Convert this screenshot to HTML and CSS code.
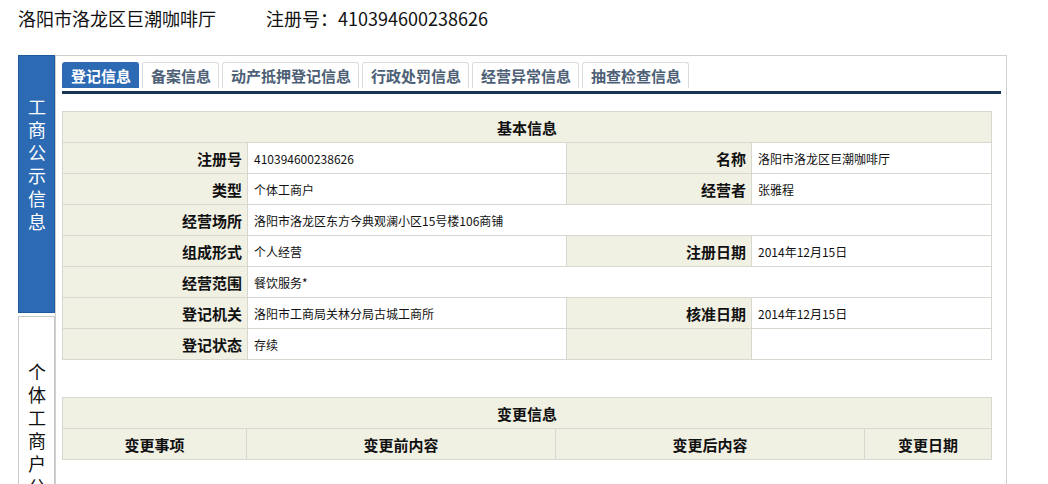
FILE: index.html
```html
<html>
<head>
    <title>企业信用信息公示</title>
    <link rel="stylesheet" href="styles.css">
</head>
<body>
    <div class="top">
        <span class="corp">洛阳市洛龙区巨潮咖啡厅</span>
        <span class="regno">注册号：410394600238626</span>
    </div>

    <div class="wrap">
        <div class="side">
            <div class="side-box active">工商公示信息</div>
            <div class="side-box">个体工商户公示信息</div>
        </div>

        <div class="main">
            <ul class="tabs">
                <li class="on">登记信息</li>
                <li>备案信息</li>
                <li>动产抵押登记信息</li>
                <li>行政处罚信息</li>
                <li>经营异常信息</li>
                <li>抽查检查信息</li>
            </ul>

            <table class="info">
                <tr><th colspan="4" class="cap">基本信息</th></tr>
                <tr>
                    <th class="c1">注册号</th><td class="c2">410394600238626</td>
                    <th class="c3">名称</th><td>洛阳市洛龙区巨潮咖啡厅</td>
                </tr>
                <tr>
                    <th>类型</th><td>个体工商户</td>
                    <th>经营者</th><td>张雅程</td>
                </tr>
                <tr>
                    <th>经营场所</th><td colspan="3">洛阳市洛龙区东方今典观澜小区15号楼106商铺</td>
                </tr>
                <tr>
                    <th>组成形式</th><td>个人经营</td>
                    <th>注册日期</th><td>2014年12月15日</td>
                </tr>
                <tr>
                    <th>经营范围</th><td colspan="3">餐饮服务*</td>
                </tr>
                <tr>
                    <th>登记机关</th><td>洛阳市工商局关林分局古城工商所</td>
                    <th>核准日期</th><td>2014年12月15日</td>
                </tr>
                <tr>
                    <th>登记状态</th><td>存续</td>
                    <th></th><td></td>
                </tr>
            </table>

            <table class="info change">
                <tr><th colspan="4" class="cap">变更信息</th></tr>
                <tr>
                    <th class="w1">变更事项</th>
                    <th class="w2">变更前内容</th>
                    <th class="w2">变更后内容</th>
                    <th>变更日期</th>
                </tr>
            </table>
        </div>
    </div>
</body>
</html>
```

FILE: styles.css
```css
body {
    margin: 0;
    background: white;
    font-family: "Noto Sans CJK SC", "Liberation Sans", sans-serif;
    color: #111;
}

.top {
    height: 55px; line-height: 36px;
    padding-left: 18px;
    font-size: 18px;
}

.top .regno {
    margin-left: 46px;
}

.wrap {
    display: flex;
    margin-left: 18px;
    width: 989px;
    height: 520px;
}

.side {
    width: 37px; flex: none;
}

.side-box {
    height: 258px;
    box-sizing: border-box;
    writing-mode: vertical-rl;
    font-size: 18px; line-height: 35px;
    letter-spacing: 5px;
    padding-top: 44px;
    border: 1px solid #c8c8c8;
    margin-bottom: 3px;
    color: #111;
}

.side-box.active {
    background: #2c6bb3; border-color: #1f5a9c;
    color: white;
    padding-top: 42px;
}

.side-box + .side-box {
    height: 259px;
    padding-top: 46px;
}

.main {
    flex: 1;
    border: 1px solid #cfcfcf;
    padding: 6px 5px 0 6px;
}

.tabs {
    list-style: none; margin: 0; padding: 0 0 3px 0;
    display: flex;
    border-bottom: 3px solid #173553;
}

.tabs li {
    height: 25px; line-height: 25px;
    padding: 0 7px 0 8px;
    margin-right: 3px;
    font-size: 15px; font-weight: bold;
    color: #4d6075;
    border: 1px solid #dcdcdc; border-bottom: none;
    border-radius: 3px 3px 0 0;
    background: white;
}

.tabs li.on {
    background: #2c6bb3; border-color: #2c6bb3;
    color: white;
}

.info {
    border-collapse: collapse;
    width: 930px;
    margin-top: 17px;
    font-size: 12px;
}

.info th, .info td {
    border: 1px solid #d8d8d0;
    height: 31px; padding: 0;
}

.info th {
    background: #f0f0e3;
    font-size: 15px; font-weight: bold;
    text-align: right; padding-right: 5px;
}

.info td {
    background: white;
    padding-left: 6px;
}

.info th.cap {
    text-align: center; padding-right: 0;
}

.info .c1 { width: 179px; }
.info .c2 { width: 312px; }
.info .c3 { width: 179px; }

.change {
    margin-top: 37px;
}

.change th {
    text-align: center; padding-right: 0;
}

.change .w1 { width: 183px; }
.change .w2 { width: 308px; }
```
